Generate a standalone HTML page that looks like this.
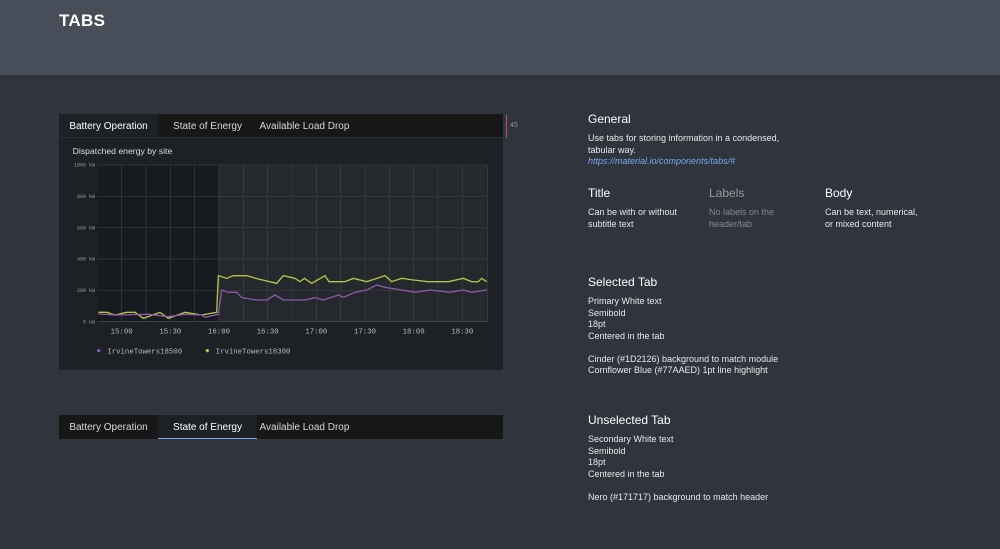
<!DOCTYPE html><html><head><style>
body{margin:0;width:1000px;height:549px;background:#2f343d;font-family:"Liberation Sans",sans-serif;position:relative;overflow:hidden;color:#fff}
.hdr{position:absolute;left:0;top:0;width:1000px;height:75px;background:#474d59}
.hdr h1{position:absolute;left:59px;top:11px;margin:0;font-size:17px;font-weight:bold;letter-spacing:0.3px}
.t{position:absolute;font-size:10px;color:#e6e6e6;white-space:nowrap}
.tabbar{position:absolute;left:59px;width:444px;height:24px;background:#171717}
.tab{position:absolute;top:0;height:24px;line-height:25px;font-size:10px;color:#d8d8d8;text-align:center}
.sel{background:#1d2126;color:#fff;border-bottom:1px solid #77aaed;height:23px}
.r{position:absolute;font-size:9px;color:#e8e8e8;line-height:11.5px}
.h{position:absolute;font-size:12px;color:#fff}
</style></head><body>
<div class="hdr"><h1>TABS</h1></div>

<div style="position:absolute;left:59px;top:138px;width:444px;height:232px;background:#1d2126"></div>
<div class="tabbar" style="top:114px">
<div class="tab sel" style="left:0;width:99px">Battery Operation</div>
<div class="tab" style="left:99px;width:99px">State of Energy</div>
<div class="tab" style="left:198px;width:95px">Available Load Drop</div>
</div>
<div style="position:absolute;left:59px;top:137px;width:444px;height:1px;background:#2a2f36"></div>
<div style="position:absolute;left:506px;top:115px;width:1px;height:23px;background:#c0505a"></div>
<div class="t" style="left:510px;top:122px;font-size:7px;color:#999">45</div>

<svg style="position:absolute;left:55px;top:110px" width="460" height="260" viewBox="0 0 1380 780">
<rect x="128" y="165" width="362" height="470" fill="#171a1e"/>
<rect x="490" y="165" width="808" height="470" fill="#25292e"/>
<g stroke="#3a3f46" stroke-width="2">
<line x1="128" y1="165" x2="1298" y2="165"/><line x1="128" y1="259" x2="1298" y2="259"/><line x1="128" y1="353" x2="1298" y2="353"/><line x1="128" y1="447" x2="1298" y2="447"/><line x1="128" y1="541" x2="1298" y2="541"/>
<line x1="200" y1="165" x2="200" y2="635"/><line x1="273" y1="165" x2="273" y2="635"/><line x1="346" y1="165" x2="346" y2="635"/><line x1="419" y1="165" x2="419" y2="635"/><line x1="492" y1="165" x2="492" y2="635"/><line x1="565" y1="165" x2="565" y2="635"/><line x1="638" y1="165" x2="638" y2="635"/><line x1="711" y1="165" x2="711" y2="635"/><line x1="784" y1="165" x2="784" y2="635"/><line x1="857" y1="165" x2="857" y2="635"/><line x1="930" y1="165" x2="930" y2="635"/><line x1="1003" y1="165" x2="1003" y2="635"/><line x1="1076" y1="165" x2="1076" y2="635"/><line x1="1149" y1="165" x2="1149" y2="635"/><line x1="1222" y1="165" x2="1222" y2="635"/><line x1="1298" y1="165" x2="1298" y2="635"/>
</g>
<line x1="128" y1="635" x2="1298" y2="635" stroke="#555" stroke-width="2"/>
<polyline fill="none" stroke="#b4c24a" stroke-width="4" points="130,607 155,607 180,615 215,607 240,607 265,625 315,607 340,625 390,607 440,615 485,607 490,497 515,505 535,497 575,497 610,507 665,520 685,497 720,505 735,515 748,505 770,520 810,497 822,515 870,515 895,505 935,515 990,497 1010,515 1040,505 1075,510 1120,515 1180,515 1225,505 1250,515 1270,515 1280,505 1295,515"/>
<polyline fill="none" stroke="#8a5aa8" stroke-width="4" points="130,612 180,615 280,613 340,620 390,613 440,615 450,622 490,613 500,540 520,547 545,547 560,563 605,570 635,570 660,555 685,570 750,570 780,563 805,570 850,555 865,562 900,547 935,540 965,525 990,532 1040,540 1080,547 1125,540 1185,547 1225,540 1250,547 1295,540"/>
<g font-family="Liberation Mono,monospace" font-size="15" fill="#999" text-anchor="end">
<text x="120" y="170">1000 kW</text><text x="120" y="264">800 kW</text><text x="120" y="358">600 kW</text><text x="120" y="452">400 kW</text><text x="120" y="546">200 kW</text><text x="120" y="640">0 kW</text>
</g>
<g font-family="Liberation Mono,monospace" font-size="22" fill="#bbb" text-anchor="middle">
<text x="200" y="670">15:00</text><text x="346" y="670">15:30</text><text x="492" y="670">16:00</text><text x="638" y="670">16:30</text><text x="784" y="670">17:00</text><text x="930" y="670">17:30</text><text x="1076" y="670">18:00</text><text x="1222" y="670">18:30</text>
</g>
<circle cx="131" cy="722" r="5" fill="#8a5aa8"/><circle cx="457" cy="722" r="5" fill="#b4c24a"/>
<g font-family="Liberation Mono,monospace" font-size="22" fill="#bbb">
<text x="157" y="730">IrvineTowers18500</text><text x="482" y="730">IrvineTowers18300</text>
</g>
<text x="53" y="132" font-family="Liberation Sans,sans-serif" font-size="26" fill="#ddd">Dispatched energy by site</text>
</svg>

<div class="tabbar" style="top:415px">
<div class="tab" style="left:0;width:99px">Battery Operation</div>
<div class="tab sel" style="left:99px;width:99px">State of Energy</div>
<div class="tab" style="left:198px;width:95px">Available Load Drop</div>
</div>

<div class="h" style="left:588px;top:112px">General</div>
<div class="r" style="left:588px;top:133px">Use tabs for storing information in a condensed,<br>tabular way.<br><i style="color:#77aaed">https://material.io/components/tabs/#</i></div>
<div class="h" style="left:588px;top:186px">Title</div>
<div class="r" style="left:588px;top:207px">Can be with or without<br>subtitle text</div>
<div class="h" style="left:709px;top:186px;color:#999">Labels</div>
<div class="r" style="left:709px;top:207px;color:#888">No labels on the<br>header/tab</div>
<div class="h" style="left:825px;top:186px">Body</div>
<div class="r" style="left:825px;top:207px">Can be text, numerical,<br>or mixed content</div>
<div class="h" style="left:588px;top:275px">Selected Tab</div>
<div class="r" style="left:588px;top:296px">Primary White text<br>Semibold<br>18pt<br>Centered in the tab<br><br>Cinder (#1D2126) background to match module<br>Cornflower Blue (#77AAED) 1pt line highlight</div>
<div class="h" style="left:588px;top:413px">Unselected Tab</div>
<div class="r" style="left:588px;top:434px">Secondary White text<br>Semibold<br>18pt<br>Centered in the tab<br><br>Nero (#171717) background to match header</div>
</body></html>
